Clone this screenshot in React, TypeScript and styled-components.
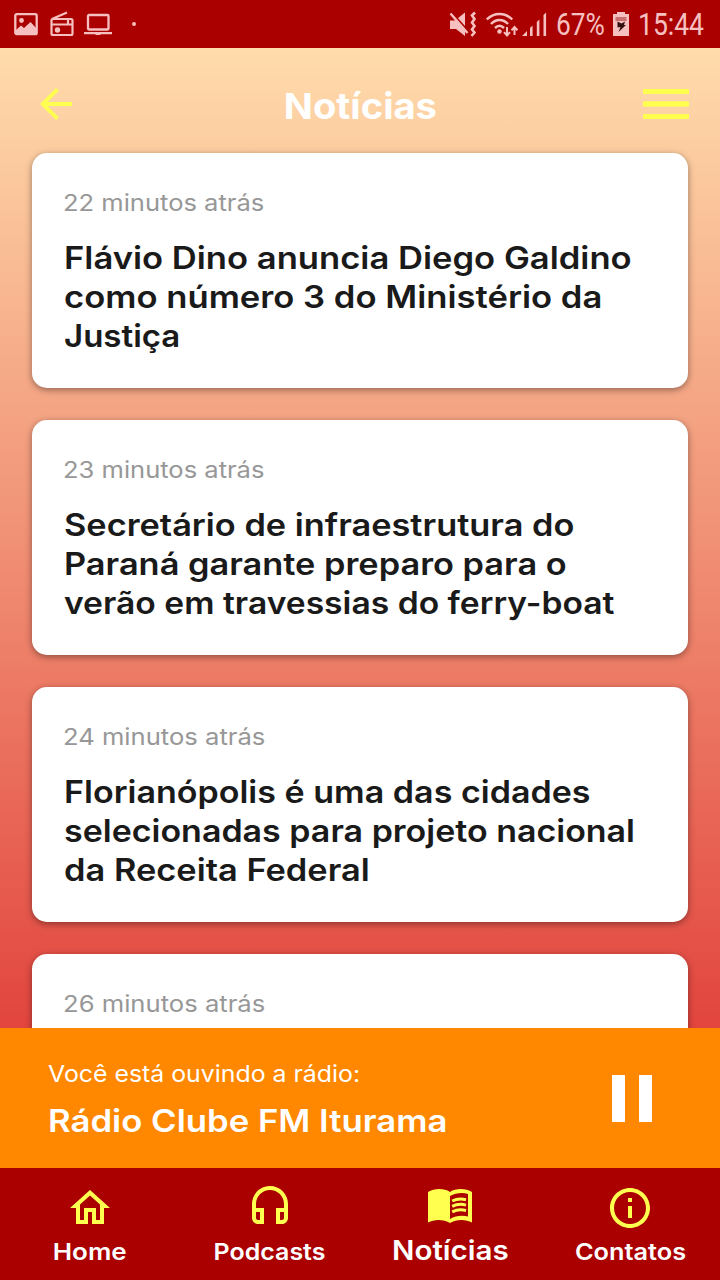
import React from "react";
import styled, { createGlobalStyle } from "styled-components";
import { MdArrowBack, MdInfoOutline } from "react-icons/md";

const ICON_YELLOW = "#ffff50";

const GlobalStyle = createGlobalStyle`
  * { box-sizing: border-box; }
  body { margin: 0; font-family: Inter, "Liberation Sans", sans-serif; }
`;

const Screen = styled.div`
  display: flex;
  flex-direction: column;
  width: 720px;
  height: 1280px;
  overflow: hidden;
`;

const StatusBar = styled.div`
  flex: none;
  display: flex;
  align-items: center;
  justify-content: space-between;
  height: 48px;
  padding: 0 16px 0 14px;
  background: #aa0000;
  color: #f7c0c0;
`;

const StatusGroup = styled.div`
  display: flex;
  align-items: center;
  height: 48px;
`;

const StatusIcon = styled.svg<{ $after?: number }>`
  display: block;
  flex: none;
  margin-right: ${(p) => p.$after ?? 0}px;
`;

const StatusText = styled.div<{ $width: number; $after?: number; $scale: number }>`
  width: ${(p) => p.$width}px;
  margin-right: ${(p) => p.$after ?? 0}px;
  padding-top: 2px;
  font: 400 31px/46px Roboto, sans-serif;
  white-space: nowrap;
  transform: scaleX(${(p) => p.$scale});
  transform-origin: left center;
`;

const Body = styled.main`
  flex: 1;
  min-height: 0;
  display: flex;
  flex-direction: column;
  overflow: hidden;
  background: linear-gradient(#ffdcac, #e2453e);
`;

const Header = styled.header`
  flex: none;
  display: grid;
  grid-template-columns: 48px 1fr 46px;
  align-items: center;
  height: 105px;
  padding: 7px 31px 0 32px;
`;

const HeaderTitle = styled.h1`
  margin: 0;
  padding: 4px 2px 0 0;
  text-align: center;
  font-size: 36px;
  font-weight: 700;
  line-height: 44px;
  transform: scaleX(1.06);
  color: #fff;
`;

const IconButton = styled.button`
  display: block;
  padding: 0;
  border: 0;
  background: none;
  color: ${ICON_YELLOW};
  line-height: 0;
`;

const List = styled.div`
  display: flex;
  flex-direction: column;
  gap: 32px;
  padding: 0 32px;
`;

const Card = styled.article`
  flex: none;
  height: 235px;
  padding: 36px 32px 0;
  border-radius: 15px;
  background: #fff;
  box-shadow: 0 2px 7px rgba(0, 0, 0, 0.4);
`;

/* One line of wide-set text; $stretch widens the letterforms. */
const Line = styled.span<{ $stretch: number }>`
  display: block;
  width: max-content;
  white-space: nowrap;
  transform: scaleX(${(p) => p.$stretch});
  transform-origin: left center;
`;

const Age = styled.div`
  margin: 0 0 20px -1px;
  font-size: 23px;
  line-height: 29px;
  color: #979797;
`;

const Headline = styled.h2`
  margin: 0;
  font-size: 31px;
  font-weight: 600;
  line-height: 39px;
  color: #1a1a1a;
`;

const Player = styled.section`
  flex: none;
  display: flex;
  align-items: center;
  justify-content: space-between;
  height: 140px;
  padding: 0 68px 0 48px;
  background: #ff8800;
  color: #fff;
`;

const PlayerText = styled.div`
  padding-top: 2px;
`;

const PlayerCaption = styled.div`
  font-size: 23px;
  line-height: 30px;
`;

const PlayerStation = styled.div`
  margin-top: 12px;
  font-size: 31px;
  font-weight: 600;
  line-height: 39px;
`;

const Pause = styled.button`
  display: flex;
  justify-content: space-between;
  width: 40px;
  height: 47px;
  padding: 0;
  border: 0;
  background: none;
`;

const PauseBar = styled.span`
  width: 13.4px;
  height: 47px;
  background: #fff;
`;

const Tabs = styled.nav`
  flex: none;
  display: grid;
  grid-template-columns: repeat(4, 1fr);
  height: 112px;
  background: #aa0000;
`;

const Tab = styled.div`
  display: flex;
  flex-direction: column;
  align-items: center;
  padding-top: 16px;
  color: ${ICON_YELLOW};
`;

const TabLabel = styled.div<{ $active?: boolean; $stretch: number }>`
  margin-top: ${(p) => (p.$active ? 4 : 5)}px;
  font-size: ${(p) => (p.$active ? 27 : 23)}px;
  font-weight: 600;
  line-height: 30px;
  transform: scaleX(${(p) => p.$stretch});
  color: #fff;
`;

type TextLine = [text: string, stretch: number];

const news: { age: TextLine; title: TextLine[] }[] = [
  {
    age: ["22 minutos atrás", 1.11],
    title: [
      ["Flávio Dino anuncia Diego Galdino", 1.116],
      ["como número 3 do Ministério da", 1.117],
      ["Justiça", 1.065],
    ],
  },
  {
    age: ["23 minutos atrás", 1.11],
    title: [
      ["Secretário de infraestrutura do", 1.108],
      ["Paraná garante preparo para o", 1.108],
      ["verão em travessias do ferry-boat", 1.085],
    ],
  },
  {
    age: ["24 minutos atrás", 1.113],
    title: [
      ["Florianópolis é uma das cidades", 1.098],
      ["selecionadas para projeto nacional", 1.096],
      ["da Receita Federal", 1.11],
    ],
  },
  { age: ["26 minutos atrás", 1.114], title: [] },
];

const HomeIcon = () => (
  <svg width="48" height="48" viewBox="0 0 24 24" fill="currentColor">
    <path d="M12 5.69l5 4.5V18h-2v-6H9v6H7v-7.81l5-4.5M12 3L2 12h3v8h6v-6h2v6h6v-8h3L12 3z" />
  </svg>
);

const HeadsetIcon = () => (
  <svg width="48" height="48" viewBox="0 0 24 24" fill="currentColor">
    <path d="M12 1c-4.97 0-9 4.03-9 9v7c0 1.66 1.34 3 3 3h3v-8H5v-2c0-3.87 3.13-7 7-7s7 3.13 7 7v2h-4v8h3c1.66 0 3-1.34 3-3v-7c0-4.97-4.03-9-9-9zM7 14v4H6c-.55 0-1-.45-1-1v-3h2zm12 3c0 .55-.45 1-1 1h-1v-4h2v3z" />
  </svg>
);

const BookIcon = () => (
  <svg width="48" height="48" viewBox="0 0 48 48">
    <path
      fill="currentColor"
      fillRule="evenodd"
      d="M2 8C8 4.300 18 4 24 8C30 4 40 4.300 46 8V38.500C40 35 30 35 24 39C18 35 8 35 2 38.500ZM24 12V35C29.500 31.500 36.500 31 42 32.500V10C36.500 8.300 29.500 9 24 12Z"
    />
    <path
      fill="none"
      stroke="currentColor"
      strokeWidth="3"
      d="M26.200 17C30.500 14.800 36 14.600 40 15.700M26.200 22.400C30.500 20.200 36 20 40 21.100M26.200 27.800C30.500 25.600 36 25.400 40 26.500"
    />
  </svg>
);

const MenuIcon = () => (
  <svg width="46" height="48" viewBox="0 0 46 48" fill="currentColor">
    <rect x="0" y="9" width="46" height="5" rx="1" />
    <rect x="0" y="21.300" width="46" height="5.400" rx="1" />
    <rect x="0" y="34" width="46" height="5" rx="1" />
  </svg>
);

const PictureIcon = () => (
  <StatusIcon width="24" height="24" viewBox="0 0 24 24" $after={12}>
    <rect x="1.300" y="2.200" width="21.400" height="20" rx="1.500" fill="none" stroke="currentColor" strokeWidth="2.300" />
    <circle cx="7.500" cy="8.500" r="2.400" fill="currentColor" />
    <path d="M2 18l5-4.500 3 2.500 6.500-6 5.500 6v6H2z" fill="currentColor" />
  </StatusIcon>
);

const RadioIcon = () => (
  <StatusIcon width="24" height="28" viewBox="0 0 24 28" $after={10}>
    <g fill="none" stroke="currentColor" strokeWidth="2.200">
      <rect x="1.500" y="9" width="21" height="16" rx="1.500" />
      <path d="M2 9L17 2.500M2 14.500h20.500M18 10v4" />
    </g>
    <circle cx="7.500" cy="20" r="2.700" fill="currentColor" />
  </StatusIcon>
);

const LaptopIcon = () => (
  <StatusIcon width="28" height="24" viewBox="0 0 28 24" $after={20}>
    <rect x="4" y="3" width="20.500" height="14.500" rx="1" fill="none" stroke="currentColor" strokeWidth="2.300" />
    <path d="M0 20h28v2.200H17l-1 .8h-4l-1-.8H0z" fill="currentColor" />
  </StatusIcon>
);

const DotIcon = () => (
  <StatusIcon width="4" height="4" viewBox="0 0 4 4">
    <circle cx="2" cy="2" r="2" fill="currentColor" />
  </StatusIcon>
);

const MutedIcon = () => (
  <StatusIcon width="28" height="28" viewBox="0 0 28 28" $after={9}>
    <path d="M1 10.500h5l10-8V26l-9-7H1z" fill="currentColor" />
    <path d="M2.500 2.500l17 19" stroke="#aa0000" strokeWidth="2" />
    <path d="M1.500 3.500l17 19.500" stroke="currentColor" strokeWidth="2.400" />
    <path
      d="M26 2.500l-3 3 2.500 3.500-2.500 3.500 2.500 3.500-2.500 3.500 2.500 3-3 3.500"
      fill="none"
      stroke="currentColor"
      strokeWidth="2.600"
    />
  </StatusIcon>
);

const WifiIcon = () => (
  <StatusIcon width="32" height="28" viewBox="0 0 32 28" $after={4}>
    <g fill="none" stroke="currentColor" strokeWidth="2.500">
      <path d="M.8 9.500C8 2 19 2 26.200 9.500M5 14c5-5.200 12-5.200 17 0M9 18c3-3 6-3 9 0" />
    </g>
    <circle cx="13.500" cy="21.500" r="2.200" fill="currentColor" />
    <path d="M21 17v8M18 22.200L21 25.500l3-3.300M28.500 25v-7M25.500 20.300l3-3.300 3 3.300" fill="none" stroke="currentColor" strokeWidth="2" />
  </StatusIcon>
);

const SignalIcon = () => (
  <StatusIcon width="25" height="26" viewBox="0 0 25 26" $after={9} fill="currentColor">
    <path d="M0 25l5-5v5zM8 17l2.600-2.600V25H8zM14.800 11l2.600-2.600V25h-2.600zM21.500 4l2.600-2.600V25h-2.600z" />
  </StatusIcon>
);

const BatteryIcon = () => (
  <StatusIcon width="16" height="26" viewBox="0 0 16 26" $after={9}>
    <path d="M0 3h4V1h8v2h4v22H0z" fill="currentColor" />
    <path d="M2.500 6h11v4h-11z" fill="#c87070" />
    <path d="M4.500 10.500l4 2 3.500-2-1 3.500h2L5.500 21l2-5-3 .5z" fill="#331010" />
  </StatusIcon>
);

export default function App() {
  return (
    <>
      <GlobalStyle />
      <Screen>
        <StatusBar>
          <StatusGroup>
            <PictureIcon />
            <RadioIcon />
            <LaptopIcon />
            <DotIcon />
          </StatusGroup>
          <StatusGroup>
            <MutedIcon />
            <WifiIcon />
            <SignalIcon />
            <StatusText $width={48} $after={9} $scale={0.85}>67%</StatusText>
            <BatteryIcon />
            <StatusText $width={66} $scale={0.855}>15:44</StatusText>
          </StatusGroup>
        </StatusBar>
        <Body>
          <Header>
            <IconButton aria-label="Voltar">
              <MdArrowBack size={48} />
            </IconButton>
            <HeaderTitle>Notícias</HeaderTitle>
            <IconButton aria-label="Menu">
              <MenuIcon />
            </IconButton>
          </Header>
          <List>
            {news.map(({ age, title }) => (
              <Card key={age[0]}>
                <Age>
                  <Line $stretch={age[1]}>{age[0]}</Line>
                </Age>
                <Headline>
                  {title.map(([text, stretch]) => (
                    <Line key={text} $stretch={stretch}>{text}</Line>
                  ))}
                </Headline>
              </Card>
            ))}
          </List>
        </Body>
        <Player>
          <PlayerText>
            <PlayerCaption>
              <Line $stretch={1.08}>Você está ouvindo a rádio:</Line>
            </PlayerCaption>
            <PlayerStation>
              <Line $stretch={1.12}>Rádio Clube FM Iturama</Line>
            </PlayerStation>
          </PlayerText>
          <Pause aria-label="Pausar">
            <PauseBar />
            <PauseBar />
          </Pause>
        </Player>
        <Tabs>
          <Tab>
            <HomeIcon />
            <TabLabel $stretch={1.13}>Home</TabLabel>
          </Tab>
          <Tab>
            <HeadsetIcon />
            <TabLabel $stretch={1.085}>Podcasts</TabLabel>
          </Tab>
          <Tab>
            <BookIcon />
            <TabLabel $active $stretch={1.095}>Notícias</TabLabel>
          </Tab>
          <Tab>
            <MdInfoOutline size={48} />
            <TabLabel $stretch={1.1}>Contatos</TabLabel>
          </Tab>
        </Tabs>
      </Screen>
    </>
  );
}
